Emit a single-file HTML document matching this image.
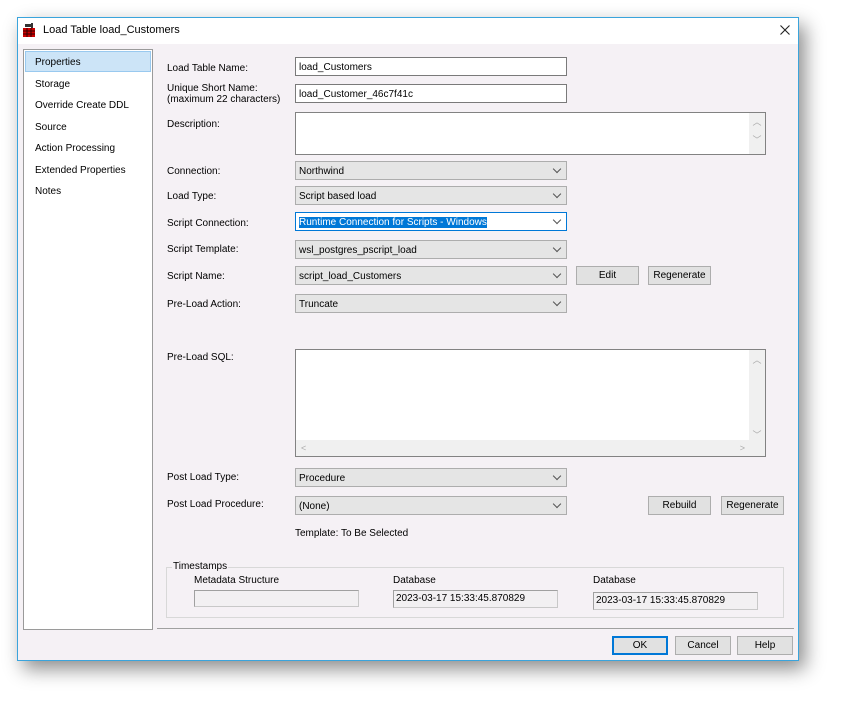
<!DOCTYPE html>
<html><head><meta charset="utf-8"><style>
*{box-sizing:border-box;margin:0;padding:0}
body{width:847px;height:709px;background:#fff;position:relative;overflow:hidden;font-family:"Liberation Sans",Arial,sans-serif;font-size:10px;color:#000}
.a{position:absolute}
.win{left:17px;top:17px;width:782px;height:644px;background:#f5f1f5;border:1px solid #3aa4dc;box-shadow:6px 8px 18px rgba(0,0,0,.45)}
.tb{left:0;top:0;width:780px;height:26px;background:#fff}
.lbl{position:absolute;left:167px;white-space:nowrap;line-height:12px}
.inp{position:absolute;background:#fff;border:1px solid #7a7a7a;height:19px;padding:3px 3px;line-height:13px;white-space:nowrap}
.cb{position:absolute;left:295px;width:272px;height:19px;background:#e5e5e5;border:1px solid #adadad;padding:3px 3px;line-height:13px;white-space:nowrap}
.cb:after{content:"";position:absolute;right:6px;top:4px;width:5px;height:5px;border-right:1px solid #555;border-bottom:1px solid #555;transform:rotate(45deg)}
.btn{position:absolute;height:19px;background:#e1e1e1;border:1px solid #adadad;text-align:center;line-height:17px}
.ta{position:absolute;background:#fff;border:1px solid #828282}
.li{position:absolute;left:35px;white-space:nowrap}
.ro{position:absolute;background:#f2f0f2;border:1px solid #c8c8c8;border-top-color:#a0a0a0;border-left-color:#a0a0a0;padding:2px 2px;white-space:nowrap;line-height:12px}
</style></head><body>
<div class="a win">
 <div class="a tb"></div>
</div>
<svg class="a" style="left:22px;top:23px" width="14" height="14" viewBox="0 0 14 14">
<rect x="1" y="5" width="12" height="9" fill="#c00"/>
<g stroke="#300" stroke-width="1"><line x1="1" y1="8" x2="13" y2="8"/><line x1="1" y1="11" x2="13" y2="11"/><line x1="5" y1="5" x2="5" y2="14"/><line x1="9" y1="5" x2="9" y2="14"/></g>
<rect x="3" y="1" width="7" height="3" fill="#333"/><rect x="9" y="0" width="2" height="5" fill="#333"/>
</svg>
<div class="a" style="left:43px;top:24px;font-size:11px">Load Table load_Customers</div>
<svg class="a" style="left:780px;top:25px" width="10" height="10" viewBox="0 0 10 10"><path d="M0.5 0.5L9.5 9.5M9.5 0.5L0.5 9.5" stroke="#222" stroke-width="1.1"/></svg>

<div class="a" style="left:23px;top:49px;width:130px;height:581px;background:#fff;border:1px solid #9a9a9a"></div>
<div class="a" style="left:25px;top:51px;width:126px;height:21px;background:#cce4f7;border:1px solid #99c9ef"></div>
<div class="li" style="top:57px">Properties</div>
<div class="li" style="top:79px">Storage</div>
<div class="li" style="top:100px">Override Create DDL</div>
<div class="li" style="top:122px">Source</div>
<div class="li" style="top:143px">Action Processing</div>
<div class="li" style="top:165px">Extended Properties</div>
<div class="li" style="top:186px">Notes</div>

<div class="lbl" style="top:63px">Load Table Name:</div>
<div class="lbl" style="top:83px;line-height:11px">Unique Short Name:<br>(maximum 22 characters)</div>
<div class="lbl" style="top:119px">Description:</div>
<div class="lbl" style="top:166px">Connection:</div>
<div class="lbl" style="top:191px">Load Type:</div>
<div class="lbl" style="top:218px">Script Connection:</div>
<div class="lbl" style="top:244px">Script Template:</div>
<div class="lbl" style="top:271px">Script Name:</div>
<div class="lbl" style="top:299px">Pre-Load Action:</div>
<div class="lbl" style="top:352px">Pre-Load SQL:</div>
<div class="lbl" style="top:472px">Post Load Type:</div>
<div class="lbl" style="top:499px">Post Load Procedure:</div>

<div class="inp" style="left:295px;top:57px;width:272px">load_Customers</div>
<div class="inp" style="left:295px;top:84px;width:272px">load_Customer_46c7f41c</div>
<div class="ta" style="left:295px;top:112px;width:471px;height:43px"></div>
<div class="a" style="left:749px;top:113px;width:16px;height:41px;background:#f0f0f0;color:#aaa;font-size:9px;text-align:center;line-height:18px">︿<br>﹀</div>

<div class="cb" style="top:161px">Northwind</div>
<div class="cb" style="top:186px">Script based load</div>
<div class="cb" style="top:212px;background:#fff;border-color:#0078d7"><span style="background:#0078d7;color:#fff">Runtime Connection for Scripts - Windows</span></div>
<div class="cb" style="top:240px">wsl_postgres_pscript_load</div>
<div class="cb" style="top:266px">script_load_Customers</div>
<div class="cb" style="top:294px">Truncate</div>
<div class="btn" style="left:576px;top:266px;width:63px">Edit</div>
<div class="btn" style="left:648px;top:266px;width:63px">Regenerate</div>

<div class="ta" style="left:295px;top:349px;width:471px;height:108px"></div>
<div class="a" style="left:296px;top:440px;width:469px;height:16px;background:#f0f0f0;color:#aaa;font-size:9px;line-height:16px"><span style="margin-left:5px">&lt;</span><span style="position:absolute;right:20px">&gt;</span></div>
<div class="a" style="left:749px;top:350px;width:16px;height:90px;background:#f0f0f0;color:#aaa;font-size:9px;text-align:center"><div style="margin-top:3px">︿</div><div style="margin-top:62px">﹀</div></div>

<div class="cb" style="top:468px">Procedure</div>
<div class="cb" style="top:496px">(None)</div>
<div class="btn" style="left:648px;top:496px;width:63px">Rebuild</div>
<div class="btn" style="left:721px;top:496px;width:63px">Regenerate</div>
<div class="a" style="left:295px;top:528px">Template: To Be Selected</div>

<div class="a" style="left:166px;top:567px;width:618px;height:51px;border:1px solid #d8d8d8"></div>
<div class="a" style="left:172px;top:561px;background:#f5f1f5;padding:0 1px">Timestamps</div>
<div class="a" style="left:194px;top:575px">Metadata Structure</div>
<div class="a" style="left:393px;top:575px">Database</div>
<div class="a" style="left:593px;top:575px">Database</div>
<div class="ro" style="left:194px;top:590px;width:165px;height:17px"></div>
<div class="ro" style="left:393px;top:590px;width:165px;height:18px">2023-03-17 15:33:45.870829</div>
<div class="ro" style="left:593px;top:592px;width:165px;height:18px">2023-03-17 15:33:45.870829</div>

<div class="a" style="left:157px;top:628px;width:637px;height:1px;background:#a0a0a0"></div>
<div class="btn" style="left:612px;top:636px;width:56px;border:1px solid #0078d7;box-shadow:inset 0 0 0 1px #0078d7">OK</div>
<div class="btn" style="left:675px;top:636px;width:56px">Cancel</div>
<div class="btn" style="left:737px;top:636px;width:56px">Help</div>
</body></html>
